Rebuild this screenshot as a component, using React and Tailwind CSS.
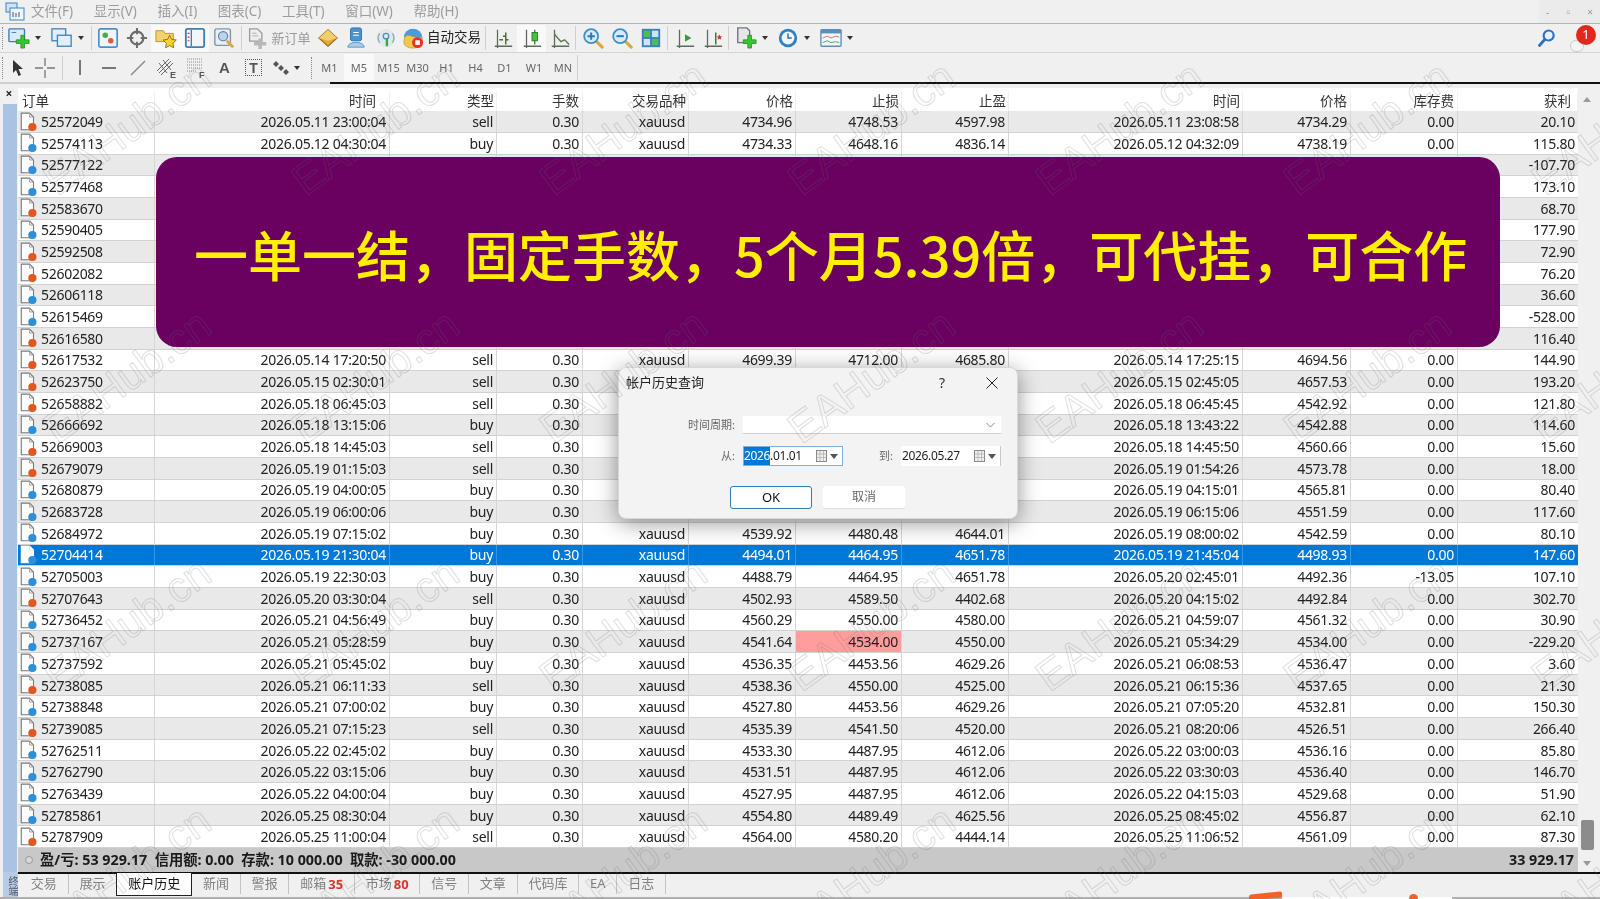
import React from "react";

const FONT = "font-['Noto_Sans','Noto_Sans_CJK_SC',sans-serif]";
const COLS = "grid-cols-[137px_235px_107px_86px_106px_107px_106px_107px_234px_108px_107px_120px]";

const R = (order, open, type, price, sl, tp, close, cp, swap, profit) => ({ order, open, type, price, sl, tp, close, cp, swap, profit });
const hid = (order, type, profit) => R(order, "", type, "", "", "", "", "", "", profit);
const ROWS = [
  R("52572049", "2026.05.11 23:00:04", "sell", "4734.96", "4748.53", "4597.98", "2026.05.11 23:08:58", "4734.29", "0.00", "20.10"),
  R("52574113", "2026.05.12 04:30:04", "buy", "4734.33", "4648.16", "4836.14", "2026.05.12 04:32:09", "4738.19", "0.00", "115.80"),
  hid("52577122", "buy", "-107.70"),
  hid("52577468", "buy", "173.10"),
  hid("52583670", "sell", "68.70"),
  hid("52590405", "buy", "177.90"),
  hid("52592508", "sell", "72.90"),
  hid("52602082", "sell", "76.20"),
  hid("52606118", "buy", "36.60"),
  hid("52615469", "buy", "-528.00"),
  hid("52616580", "sell", "116.40"),
  R("52617532", "2026.05.14 17:20:50", "sell", "4699.39", "4712.00", "4685.80", "2026.05.14 17:25:15", "4694.56", "0.00", "144.90"),
  R("52623750", "2026.05.15 02:30:01", "sell", "", "", "", "2026.05.15 02:45:05", "4657.53", "0.00", "193.20"),
  R("52658882", "2026.05.18 06:45:03", "sell", "", "", "", "2026.05.18 06:45:45", "4542.92", "0.00", "121.80"),
  R("52666692", "2026.05.18 13:15:06", "buy", "", "", "", "2026.05.18 13:43:22", "4542.88", "0.00", "114.60"),
  R("52669003", "2026.05.18 14:45:03", "sell", "", "", "", "2026.05.18 14:45:50", "4560.66", "0.00", "15.60"),
  R("52679079", "2026.05.19 01:15:03", "sell", "", "", "", "2026.05.19 01:54:26", "4573.78", "0.00", "18.00"),
  R("52680879", "2026.05.19 04:00:05", "buy", "", "", "", "2026.05.19 04:15:01", "4565.81", "0.00", "80.40"),
  R("52683728", "2026.05.19 06:00:06", "buy", "", "", "", "2026.05.19 06:15:06", "4551.59", "0.00", "117.60"),
  R("52684972", "2026.05.19 07:15:02", "buy", "4539.92", "4480.48", "4644.01", "2026.05.19 08:00:02", "4542.59", "0.00", "80.10"),
  R("52704414", "2026.05.19 21:30:04", "buy", "4494.01", "4464.95", "4651.78", "2026.05.19 21:45:04", "4498.93", "0.00", "147.60"),
  R("52705003", "2026.05.19 22:30:03", "buy", "4488.79", "4464.95", "4651.78", "2026.05.20 02:45:01", "4492.36", "-13.05", "107.10"),
  R("52707643", "2026.05.20 03:30:04", "sell", "4502.93", "4589.50", "4402.68", "2026.05.20 04:15:02", "4492.84", "0.00", "302.70"),
  R("52736452", "2026.05.21 04:56:49", "buy", "4560.29", "4550.00", "4580.00", "2026.05.21 04:59:07", "4561.32", "0.00", "30.90"),
  R("52737167", "2026.05.21 05:28:59", "buy", "4541.64", "4534.00", "4550.00", "2026.05.21 05:34:29", "4534.00", "0.00", "-229.20"),
  R("52737592", "2026.05.21 05:45:02", "buy", "4536.35", "4453.56", "4629.26", "2026.05.21 06:08:53", "4536.47", "0.00", "3.60"),
  R("52738085", "2026.05.21 06:11:33", "sell", "4538.36", "4550.00", "4525.00", "2026.05.21 06:15:36", "4537.65", "0.00", "21.30"),
  R("52738848", "2026.05.21 07:00:02", "buy", "4527.80", "4453.56", "4629.26", "2026.05.21 07:05:20", "4532.81", "0.00", "150.30"),
  R("52739085", "2026.05.21 07:15:23", "sell", "4535.39", "4541.50", "4520.00", "2026.05.21 08:20:06", "4526.51", "0.00", "266.40"),
  R("52762511", "2026.05.22 02:45:02", "buy", "4533.30", "4487.95", "4612.06", "2026.05.22 03:00:03", "4536.16", "0.00", "85.80"),
  R("52762790", "2026.05.22 03:15:06", "buy", "4531.51", "4487.95", "4612.06", "2026.05.22 03:30:03", "4536.40", "0.00", "146.70"),
  R("52763439", "2026.05.22 04:00:04", "buy", "4527.95", "4487.95", "4612.06", "2026.05.22 04:15:03", "4529.68", "0.00", "51.90"),
  R("52785861", "2026.05.25 08:30:04", "buy", "4554.80", "4489.49", "4625.56", "2026.05.25 08:45:02", "4556.87", "0.00", "62.10"),
  R("52787909", "2026.05.25 11:00:04", "sell", "4564.00", "4580.20", "4444.14", "2026.05.25 11:06:52", "4561.09", "0.00", "87.30"),
];

const Ic = ({ children, s = 22 }) => (
  <svg width={s} height={s} viewBox="0 0 24 24" fill="none" className="shrink-0">{children}</svg>
);
const Plus = ({ x = 0, y = 0 }) => (
  <path transform={`translate(${x} ${y})`} d="M5 0h4v5h5v4H9v5H5V9H0V5h5z" fill="#35c72e" stroke="#1f8a1c" strokeWidth=".8" />
);
const Mag = ({ sign }) => (
  <Ic>
    <path d="M15 15l7 7" stroke="#d9a93a" strokeWidth="3.4" strokeLinecap="round" />
    <circle cx="10" cy="10" r="7.6" fill="#d4ecfa" stroke="#3f8fc4" strokeWidth="2" />
    <path d={sign === "+" ? "M6 10h8M10 6v8" : "M6 10h8"} stroke="#2a7bb5" strokeWidth="2.2" />
  </Ic>
);
const Bars = ({ kind }) => (
  <Ic>
    <path d="M3 21h19M6 3v18M6 21v2" stroke="#5c6b5a" strokeWidth="1.4" />
    {kind === "bar" && <path d="M8 14h4M15 6v13M12 10h3M15 14h3" stroke="#4e6b3e" strokeWidth="1.6" />}
    {kind === "candle" && <><path d="M15 3v16" stroke="#4e6b3e" strokeWidth="1.4" /><rect x="12" y="6" width="6" height="9" fill="#3fc43a" stroke="#2b7a2a" /></>}
    {kind === "line" && <path d="M6 8l7 8 4-2 5 5" stroke="#5c7a4a" strokeWidth="1.6" />}
    {kind === "shift" && <path d="M12 8l7 4-7 4z" fill="#3a9a3a" />}
    {kind === "auto" && <><path d="M15 6v13" stroke="#4e6b3e" strokeWidth="1.6" /><path d="M19 8l1 2 2 .3-1.5 1.5.4 2-1.9-1-1.9 1 .4-2L16 10.300l2-.3z" fill="#d33" /></>}
  </Ic>
);
const Drop = () => <span className="ml-[5px] h-0 w-0 border-x-[3.5px] border-t-[4px] border-x-transparent border-t-[#333]" />;
const Sep = () => <span className="mx-[2px] h-[24px] w-px shrink-0 bg-[#cfcfcf]" />;
const Btn = ({ w, active, children }) => (
  <div style={{ width: w }} className={`flex h-[27px] shrink-0 items-center justify-center ${active ? "bg-[#f9f9f9]" : ""}`}>{children}</div>
);

function Toolbar1() {
  return (
    <div className="flex h-[29px] items-center border-b border-[#d4d4d4] pl-[2px]">
      <span className="h-[22px] w-[2px] shrink-0 border-l border-dotted border-[#888]" />
      <Btn w={41}><Ic><rect x="1" y="2" width="17" height="14" rx="1" fill="#dbe9f6" stroke="#3d7eb8" strokeWidth="1.5" /><path d="M4 6h5" stroke="#3d7eb8" /><Plus x={9} y={9} /></Ic><Drop /></Btn>
      <Btn w={44}><Ic><rect x="1" y="2" width="15" height="13" fill="#e4eef8" stroke="#4a86bc" strokeWidth="1.5" /><rect x="7" y="9" width="15" height="12" fill="#e4eef8" stroke="#4a86bc" strokeWidth="1.5" /></Ic><Drop /></Btn>
      <Sep />
      <Btn w={28}><Ic><rect x="2" y="2" width="20" height="20" rx="2" fill="#eef4fa" stroke="#4a8fc6" strokeWidth="1.8" /><circle cx="9" cy="9" r="3" fill="#3fb048" /><circle cx="15" cy="15" r="3" fill="#e05a3a" /></Ic></Btn>
      <Btn w={29}><Ic><circle cx="12" cy="12" r="7" stroke="#6d6d6d" strokeWidth="2.4" /><path d="M12 1v7M12 16v7M1 12h7M16 12h7" stroke="#6d6d6d" strokeWidth="2.2" /></Ic></Btn>
      <Btn w={30} active><Ic><path d="M1 4h8l2 3h9v9H1z" fill="#f4d26a" stroke="#b8912f" /><path d="M16 9l2.200 4.500 5 .7-3.600 3.500.9 5-4.500-2.400-4.500 2.400.9-5-3.600-3.500 5-.7z" fill="#f7d22e" stroke="#8f6c14" strokeWidth="1" /></Ic></Btn>
      <Btn w={28} active><Ic><rect x="2" y="2" width="20" height="20" rx="2" fill="#f2f6fa" stroke="#3f7fb4" strokeWidth="2" /><path d="M8 3v18" stroke="#3f7fb4" strokeWidth="1.500" /><path d="M4 7h2M4 11h2M4 15h2" stroke="#c33" strokeWidth="1.300" /></Ic></Btn>
      <Btn w={30}><Ic><rect x="2" y="2" width="17" height="18" rx="2" fill="#e7eef5" stroke="#8494a5" strokeWidth="1.500" /><circle cx="11" cy="10" r="5" fill="#bcd4ea" stroke="#5a85ad" strokeWidth="1.300" /><path d="M15 15l7 7" stroke="#d9a93a" strokeWidth="3" /></Ic></Btn>
      <Sep />
      <Btn w={70}>
        <Ic s={21}><path d="M3 1h9l5 5v9H3z" fill="#eee" stroke="#9a9a9a" strokeWidth="1.500" /><path d="M6 6h5M6 9h7" stroke="#aaa" /><path d="M13 12h4v4h5v4h-5v4h-4v-4H8v-4h5z" fill="#b8b8b8" /></Ic>
        <span className="ml-[3px] text-[13px] leading-none text-[#9a9a9a]">新订单</span>
      </Btn>
      <Btn w={27}><Ic><path d="M12 3l10 9-10 9L2 12z" fill="#e4ab35" stroke="#9a6c1a" strokeWidth="1.200" /><path d="M12 3l10 9-10 3L2 12z" fill="#f2cd6d" /></Ic></Btn>
      <Btn w={30}><Ic><rect x="6" y="1" width="12" height="14" rx="2" fill="#4b93cf" stroke="#2b6ea8" /><path d="M9 6h6M9 9h6" stroke="#fff" strokeWidth="1.300" /><path d="M3 22c0-7 18-7 18 0z" fill="#a9cdec" stroke="#5f95c4" /></Ic></Btn>
      <Btn w={29}><Ic><circle cx="12" cy="12" r="10" fill="#dfe8ef" /><path d="M5 7a9 9 0 0 0 0 10M19 7a9 9 0 0 1 0 10" stroke="#9aa7b2" strokeWidth="1.600" /><circle cx="12" cy="10" r="3" stroke="#4b93cf" strokeWidth="1.500" /><path d="M13 12v9" stroke="#39a83c" strokeWidth="2.500" /></Ic></Btn>
      <Btn w={83}>
        <Ic><path d="M2 11a10 9 0 0 1 20 0z" fill="#4b9bd8" /><path d="M3 11c5-5 8 2 19 0v6a10 6 0 0 1-20 0z" fill="#f2c74e" stroke="#c9962c" strokeWidth=".8" /><circle cx="17" cy="17" r="6" fill="#e8331f" /><rect x="14.500" y="14.500" width="5" height="5" fill="#fff" /></Ic>
        <span className="ml-[3px] text-[13.5px] leading-none text-[#222]">自动交易</span>
      </Btn>
      <Sep />
      <Btn w={29}><Bars kind="bar" /></Btn>
      <Btn w={29} active><Bars kind="candle" /></Btn>
      <Btn w={27}><Bars kind="line" /></Btn>
      <Sep />
      <Btn w={29}><Mag sign="+" /></Btn>
      <Btn w={29}><Mag sign="-" /></Btn>
      <Btn w={29}><Ic><rect x="2" y="2" width="20" height="20" fill="#3a7fc0" /><rect x="4" y="4" width="7" height="7" fill="#4fbd50" /><rect x="13" y="4" width="7" height="7" fill="#cfe3f6" /><rect x="4" y="13" width="7" height="7" fill="#cfe3f6" /><rect x="13" y="13" width="7" height="7" fill="#4fbd50" /></Ic></Btn>
      <Sep />
      <Btn w={29}><Bars kind="shift" /></Btn>
      <Btn w={27}><Bars kind="auto" /></Btn>
      <Sep />
      <Btn w={40}><Ic><path d="M3 1h10l3 3v13H3z" fill="#e6e6e6" stroke="#6d7680" strokeWidth="1.500" /><Plus x={9} y={9} /></Ic><Drop /></Btn>
      <Btn w={44}><Ic><circle cx="12" cy="12" r="10" fill="#2f7fc4" /><circle cx="12" cy="12" r="7" fill="#eef6fc" /><path d="M12 7v5h4" stroke="#2f6ea8" strokeWidth="1.600" /></Ic><Drop /></Btn>
      <Btn w={42}><Ic><rect x="1" y="3" width="22" height="18" rx="1" fill="#f1f6fa" stroke="#5f8db4" strokeWidth="1.500" /><rect x="1" y="3" width="22" height="4" fill="#5f8db4" /><path d="M3 12l5-2 4 2 5-2 4 1" stroke="#d66" /><path d="M3 17l5-2 4 2 5-1 4 1" stroke="#4a4" /></Ic><Drop /></Btn>
      <div className="ml-auto mr-[4px] flex items-center gap-[13px]">
        <Ic s={20}><circle cx="14" cy="9" r="6" fill="#e6f1fb" stroke="#2f71bd" strokeWidth="2.600" /><path d="M9.500 13.500L3 21" stroke="#2f71bd" strokeWidth="3.400" strokeLinecap="round" /></Ic>
        <div className="relative h-[27px] w-[26px]">
          <span className="absolute bottom-0 left-0 h-[12px] w-[14px] rounded-full border border-[#ccc] bg-[#f4f4f4]" />
          <span className="absolute right-0 top-0 flex h-[20px] w-[20px] items-center justify-center rounded-full bg-[#e0281c] text-[13px] leading-none text-white">1</span>
        </div>
      </div>
    </div>
  );
}

const Tool = ({ w, children }) => <div style={{ width: w }} className="flex h-[27px] shrink-0 items-center justify-center">{children}</div>;

function Toolbar2() {
  const periods = [["M1", 29], ["M5", 30], ["M15", 29], ["M30", 29], ["H1", 29], ["H4", 29], ["D1", 29], ["W1", 30], ["MN", 28]];
  return (
    <div className="flex h-[29px] items-center pl-[2px]">
      <span className="mr-[1px] h-[22px] w-[2px] shrink-0 border-l border-dotted border-[#888]" />
      <Tool w={25}><svg width="14" height="18" viewBox="0 0 14 18"><path d="M2 1l10 9H7.500l2.500 6-2.500 1L5 11l-3 3z" fill="#333" /></svg></Tool>
      <Tool w={30}><svg width="20" height="20" viewBox="0 0 20 20"><path d="M10 0v8M10 12v8M0 10h8M12 10h8" stroke="#777" strokeWidth="1.300" /></svg></Tool>
      <Sep />
      <Tool w={29}><span className="h-[15px] w-[2px] bg-[#777]" /></Tool>
      <Tool w={29}><span className="h-[2px] w-[14px] bg-[#777]" /></Tool>
      <Tool w={29}><svg width="16" height="16" viewBox="0 0 16 16"><path d="M1 15L15 1" stroke="#888" strokeWidth="1.500" /></svg></Tool>
      <Tool w={29}><svg width="22" height="22" viewBox="0 0 22 22"><path d="M1 14L13 2M3 16L15 4M5 18L17 6M3 6l8 10M7 3l8 10" stroke="#666" /><text x="14" y="21" fontSize="9" fontWeight="700" fill="#555" fontFamily="Liberation Sans">E</text></svg></Tool>
      <Tool w={29}><svg width="22" height="22" viewBox="0 0 22 22"><path d="M2 2h16M2 5h16M2 8h16M2 11h16M2 14h10" stroke="#888" strokeDasharray="1 1" /><text x="14" y="21" fontSize="9" fontWeight="700" fill="#555" fontFamily="Liberation Sans">F</text></svg></Tool>
      <Tool w={29}><span className="font-['Liberation_Sans',sans-serif] text-[15px] font-bold leading-none text-[#555]">A</span></Tool>
      <Tool w={29}><span className="flex h-[17px] w-[17px] items-center justify-center border border-dotted border-[#555] font-['Liberation_Sans',sans-serif] text-[14px] font-bold leading-none text-[#555]">T</span></Tool>
      <Tool w={37}><svg width="16" height="16" viewBox="0 0 16 16"><path d="M3 1l3 3-3 3-3-3zM8 5l3 3-3 3-3-3zM13 9l3 3-3 3-3-3z" fill="#555" /></svg><Drop /></Tool>
      <span className="ml-[6px] mr-[2px] h-[22px] w-[2px] shrink-0 border-l border-dotted border-[#888]" />
      {periods.map(([p, w]) => (
        <div key={p} style={{ width: w }} className={`flex h-[27px] shrink-0 items-center justify-center text-[11px] leading-none text-[#666] ${p === "M5" ? "bg-[#f9f9f9]" : ""}`}>{p}</div>
      ))}
      <span className="h-[26px] w-px shrink-0 bg-[#cfcfcf]" />
    </div>
  );
}

const DocIcon = ({ type, selected }) => (
  <svg width="17" height="20" viewBox="0 0 15 18" className="shrink-0">
    <path d="M1 1h7.500L12 4.500V16H1z" fill={selected ? "#fff" : "#fdfdfd"} stroke={selected ? "#fff" : "#7a7a7a"} strokeWidth="1" />
    <path d="M8.500 1v3.500H12" fill="none" stroke={selected ? "#cfe3f6" : "#9a9a9a"} strokeWidth=".8" />
    <circle cx="11" cy="13.500" r="3.700" fill={type === "buy" ? "#2d8fd8" : "#e2571f"} />
  </svg>
);

const Cell = ({ children, line = true, sel, hi }) => (
  <div className={`flex h-full items-center justify-end overflow-hidden whitespace-nowrap pr-[3px] ${line ? (sel ? "border-r border-[#3b95dd]" : "border-r border-[#d6d6d6]") : ""} ${hi ? "bg-[#ff9c9c]" : ""}`}>{children}</div>
);

function Row({ r, i }) {
  const sel = r.order === "52704414";
  const bg = sel ? "bg-[#0078d7] text-white" : i % 2 === 0 ? "bg-[#e9e9e9] text-[#222]" : "bg-white text-[#222]";
  return (
    <div className={`grid h-[21.68px] ${COLS} border-b border-[#d2d2d2] text-[14px] tracking-[-0.28px] ${bg}`}>
      <div className={`flex h-full items-center gap-[4px] overflow-hidden pl-[2px] border-r ${sel ? "border-[#3b95dd]" : "border-[#d6d6d6]"}`}>
        <DocIcon type={r.type} selected={sel} />
        <span>{r.order}</span>
      </div>
      <Cell sel={sel}>{r.open}</Cell>
      <Cell sel={sel}>{r.open ? r.type : ""}</Cell>
      <Cell sel={sel}>{r.open ? "0.30" : ""}</Cell>
      <Cell sel={sel}>{r.price ? "xauusd" : ""}</Cell>
      <Cell sel={sel}>{r.price}</Cell>
      <Cell sel={sel} hi={r.order === "52737167"}>{r.sl}</Cell>
      <Cell sel={sel}>{r.tp}</Cell>
      <Cell sel={sel}>{r.close}</Cell>
      <Cell sel={sel}>{r.cp}</Cell>
      <Cell sel={sel}>{r.swap}</Cell>
      <Cell sel={sel} line={false}>{r.profit}</Cell>
    </div>
  );
}

function Header() {
  const heads = [["时间", 13], ["类型", 2], ["手数", 3], ["交易品种", 2], ["价格", 2], ["止损", 2], ["止盈", 2], ["时间", 2], ["价格", 3], ["库存费", 3], ["获利", 6]];
  return (
    <div className={`grid h-[23.2px] ${COLS} bg-white pt-[3px] text-[13.5px] text-[#333]`}>
      <div className="flex items-center pl-[4px] border-r border-[#f0f0f0]">订单</div>
      {heads.map(([h, p], i) => (
        <div key={i} style={{ paddingRight: p }} className="flex items-center justify-end border-r border-[#f0f0f0]">{h}</div>
      ))}
    </div>
  );
}

function Tabs() {
  const tabs = [["交易"], ["展示"], ["账户历史"], ["新闻"], ["警报"], ["邮箱", "35"], ["市场", "80"], ["信号"], ["文章"], ["代码库"], ["EA"], ["日志"]];
  return (
    <div className="flex h-[25px] items-start pl-[2px] text-[13px] text-[#808080]">
      {tabs.map(([t, n]) => t === "账户历史" ? (
        <div key={t} className="relative -top-[1px] flex h-[23px] items-center border-x border-b border-[#222] bg-white px-[11px] text-[#111]">{t}</div>
      ) : (
        <div key={t} className={`flex h-[20px] items-center px-[10.8px] ${t === "展示" ? "" : "border-r border-[#c4c4c4]"}`}>
          {t}
          {n && <span className="ml-[2px] mt-[2px] text-[13px] font-bold leading-none text-[#d9352a]">{n}</span>}
        </div>
      ))}
    </div>
  );
}

const CalIcon = () => (
  <span className="ml-auto mr-[4px] flex items-center gap-[3px]">
    <svg width="11" height="12" viewBox="0 0 11 12"><rect x=".5" y=".5" width="10" height="11" fill="#eee" stroke="#888" /><path d="M.5 4h10M.5 7.500h10M4 .5v11M7.500.5v11" stroke="#aaa" strokeWidth=".7" /></svg>
    <span className="h-0 w-0 border-x-[4px] border-t-[5px] border-x-transparent border-t-[#555]" />
  </span>
);

function Dialog() {
  return (
    <div className="absolute left-[618px] top-[367px] h-[152px] w-[400px] rounded-[8px] border border-[#d8d8d8] bg-[#f3f3f3] shadow-[0_4px_22px_rgba(0,0,0,0.42)]">
      <div className="flex h-[29px] items-center pl-[7px] text-[13px] text-[#222]">
        帐户历史查询
        <span className="ml-auto mr-[41px] text-[14px] text-[#333]">?</span>
        <svg width="12" height="12" viewBox="0 0 12 12" className="mr-[19px]"><path d="M.5.5l11 11M11.500.5l-11 11" stroke="#222" strokeWidth="1" /></svg>
      </div>
      <div className="mt-[19px] flex h-[18px] items-center">
        <span className="w-[116px] text-right text-[11px] text-[#666]">时间周期:</span>
        <div className="ml-[8px] flex h-[18px] w-[258px] items-center justify-end border-b border-[#cfcfcf] bg-white pr-[6px]">
          <svg width="9" height="6" viewBox="0 0 9 6"><path d="M.5 1l4 4 4-4" fill="none" stroke="#888" /></svg>
        </div>
      </div>
      <div className="mt-[12px] flex h-[20px] items-center">
        <span className="w-[116px] text-right text-[11px] text-[#666]">从:</span>
        <div className="ml-[8px] flex h-[20px] w-[100px] items-center border border-[#7fb0d8] bg-white text-[12px] tracking-[-0.35px] text-[#222]">
          <span className="bg-[#0078d7] text-white">2026</span>.01.01
          <CalIcon />
        </div>
        <span className="ml-[8px] w-[42px] text-right text-[11px] text-[#666]">到:</span>
        <div className="ml-[8px] flex h-[20px] w-[100px] items-center border-r border-[#c8c8c8] bg-white pl-[1px] text-[12px] tracking-[-0.35px] text-[#222]">
          2026.05.27
          <CalIcon />
        </div>
      </div>
      <div className="mt-[20px] flex pl-[111px]">
        <div className="flex h-[23px] w-[82px] items-center justify-center rounded-[3px] border border-[#2f7cb4] bg-white text-[13px] text-[#111]">OK</div>
        <div className="ml-[11px] flex h-[23px] w-[82px] items-center justify-center rounded-[3px] border-b border-[#ddd] bg-white text-[12px] text-[#666]">取消</div>
      </div>
    </div>
  );
}

function Watermarks() {
  const xs = [-121, 127, 375, 623, 871, 1119, 1367, 1615];
  const ys = [128, 376, 624, 872];
  return (
    <div className="pointer-events-none absolute inset-0 overflow-hidden">
      {ys.flatMap((y) => xs.map((x) => (
        <span
          key={`${x}-${y}`}
          style={{ left: x - 100, top: y - 25 }}
          className="absolute flex h-[50px] w-[200px] -rotate-[36deg] items-center justify-center font-['Liberation_Sans',sans-serif] text-[43px] leading-none text-transparent [-webkit-text-stroke:1px_rgba(110,110,110,0.22)]"
        >
          EAHub.cn
        </span>
      )))}
    </div>
  );
}

const BANNER = "一单一结\uFF0C固定手数\uFF0C5个月5.39倍\uFF0C可代挂\uFF0C可合作";

export default function App() {
  return (
    <div className={`relative h-[899px] w-[1600px] overflow-hidden bg-[#f0f0f0] ${FONT} blur-[0.4px]`}>
      <div className="flex h-[24px] items-center border-b border-[#b4b4b4] pl-[5px] text-[13.5px] text-[#9c9c9c]">
        <svg width="20" height="20" viewBox="0 0 20 20" className="mr-[6px] shrink-0"><rect x="1" y="1" width="11" height="9" fill="#cfe4f7" stroke="#3a85c7" /><rect x="5" y="6" width="14" height="12" fill="#eef6fc" stroke="#3a85c7" /><path d="M8 15v-5M11 15v-4M14 15v-5" stroke="#555" /></svg>
        <div className="flex gap-[20.6px]">
          <span>文件(F)</span><span>显示(V)</span><span>插入(I)</span><span>图表(C)</span><span>工具(T)</span><span>窗口(W)</span><span>帮助(H)</span>
        </div>
        <div className="ml-auto flex h-full items-center gap-[14px] bg-[#ebebeb] px-[7px] text-[10px] leading-none text-[#999]">
          <span>-</span><span>▫</span><span>×</span>
        </div>
      </div>
      <Toolbar1 />
      <Toolbar2 />
      <div className="h-[2px] bg-[#cfcfcf] pl-[330px]"><div className="h-full bg-[#111]" /></div>
      <div className="h-[4px] bg-[#f0f0f0]" />

      <div className="flex h-[784.3px]">
        <div className="flex w-[18px] shrink-0 flex-col">
          <div className="flex h-[16px] items-start justify-center text-[12px] font-bold leading-none text-[#222]">×</div>
          <div className="ml-[3px] w-[14px] grow bg-[#a9c3e3]" />
        </div>
        <div className="w-[1560px] shrink-0">
          <Header />
          {ROWS.map((r, i) => <Row key={r.order} r={r} i={i} />)}
          <div className="flex h-[24px] items-center bg-[#c8c8c8] text-[14.3px] font-bold text-[#1a1a1a]">
            <span className="ml-[7px] mr-[7px] h-[8px] w-[8px] rounded-full border border-[#999] bg-[#d8d8d8]" />
            <span>盈/亏: 53 929.17&nbsp; 信用额: 0.00&nbsp; 存款: 10 000.00&nbsp; 取款: -30 000.00</span>
            <span className="ml-auto mr-[4px]">33 929.17</span>
          </div>
        </div>
        <div className="flex w-[22px] shrink-0 flex-col items-center text-[#888]">
          <span className="mt-[9px] h-0 w-0 -translate-x-[2px] border-x-[4px] border-b-[5px] border-x-transparent border-b-[#999]" />
          <span className="mb-[11px] mt-auto h-[30px] w-[13px] -translate-x-[2px] rounded-[2px] bg-[#8c8c8c]" />
          <span className="mb-[6px] h-0 w-0 -translate-x-[2px] border-x-[4px] border-t-[5px] border-x-transparent border-t-[#999]" />
        </div>
      </div>

      <div className="flex h-[26.7px]">
        <div className="ml-[3px] flex w-[15px] shrink-0 items-start justify-center bg-[#b6cbe4] pt-[1px] text-[10px] leading-none text-[#556] [writing-mode:vertical-rl]">终端</div>
        <div className="grow">
          <div className="h-[1.500px] bg-[#111]" />
          <Tabs />
        </div>
      </div>

      <div className="absolute bottom-0 left-0 h-[2px] w-full bg-[#b0b0b0]" />
      <div className="absolute bottom-0 left-[1249px] h-[6px] w-[33px] -skew-y-[6deg] rounded-t-[2px] bg-[#f0622a]" />
      <div className="absolute bottom-0 left-[1282px] h-[2px] w-[170px] bg-white" />
      <div className="absolute bottom-0 left-[1409px] h-[5px] w-[9px] rounded-t-full bg-[#f0622a]" />

      <div className="absolute left-[156px] top-[157px] flex h-[190px] w-[1344px] items-center whitespace-nowrap rounded-[21px] bg-[#6a0060] pl-[38px] pt-[3px] font-['Noto_Sans_CJK_SC','Noto_Sans',sans-serif] text-[54px] font-medium leading-none text-[#fff000]">
        {BANNER}
      </div>

      <Dialog />
      <Watermarks />
    </div>
  );
}
